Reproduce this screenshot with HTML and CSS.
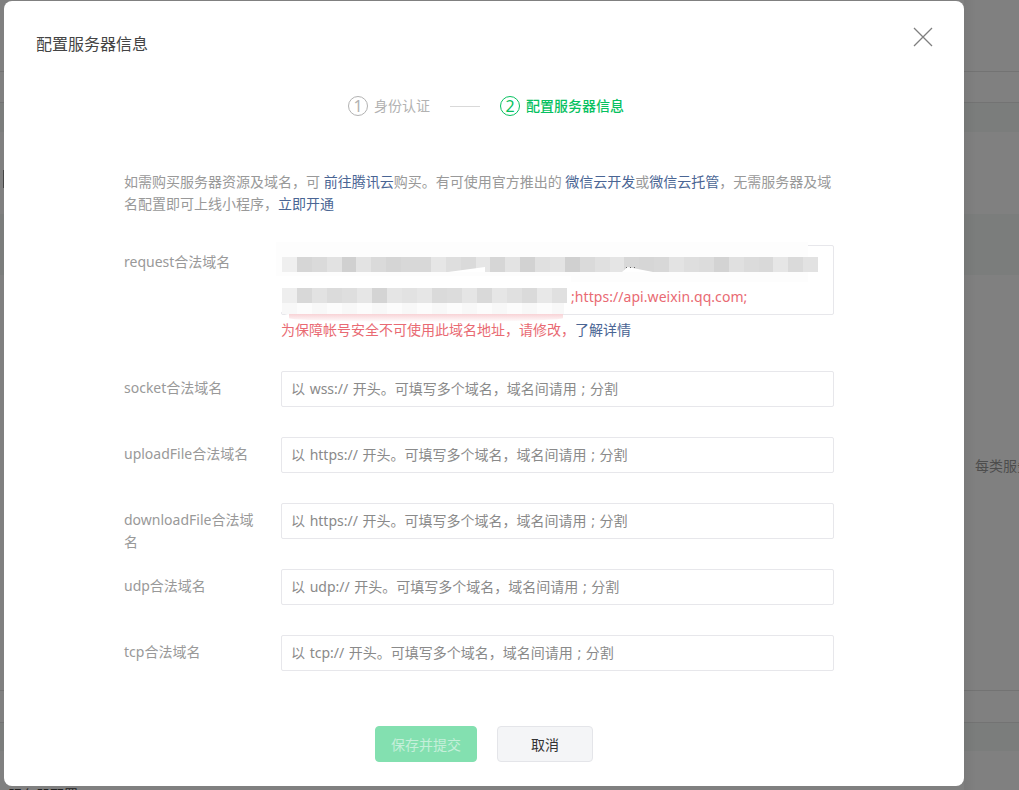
FILE: index.html
```html
<!DOCTYPE html>
<html lang="zh-CN">
<head>
<meta charset="utf-8">
<title>配置服务器信息</title>
<link rel="stylesheet" href="styles.css">
</head>
<body>
<div class="backdrop">
  <div class="bg-band b1"></div>
  <div class="bg-band b2"></div>
  <div class="bg-band b3"></div>
  <div class="bg-line l1"></div>
  <div class="bg-line l2"></div>
  <div class="bg-line l3"></div>
  <div class="bg-line l4"></div>
  <div class="bg-mark"></div>
  <div class="bg-shadow"></div>
  <div class="bg-text">每类服务</div>
  <div class="bg-foot">服务器配置</div>
</div>
<div class="modal">
  <h1 class="title">配置服务器信息</h1>
  <button class="close" aria-label="关闭"><svg width="20" height="20" viewBox="0 0 20 20"><path d="M1 1L19 19M19 1L1 19" fill="none" stroke="#7f7f7f" stroke-width="1.3"/></svg></button>
  <div class="steps">
    <div class="step"><span class="num">1</span><span>身份认证</span></div>
    <div class="step-line"></div>
    <div class="step active"><span class="num">2</span><span class="step-label">配置服务器信息</span></div>
  </div>
  <p class="intro">如需购买服务器资源及域名，可 <a>前往腾讯云</a>购买。有可使用官方推出的 <a>微信云开发</a>或<a>微信云托管</a>，无需服务器及域名配置即可上线小程序，<a>立即开通</a></p>
  <div class="form">
    <div class="row first">
      <label>request合法域名</label>
      <div class="field">
        <div class="textarea">
          <div class="mosaic m1">
            <i style="background:#efefef"></i><i style="background:#d6d6d6"></i><i style="background:#dadada"></i><i style="background:#e2e2e2"></i><i style="background:#d0d0d0"></i><i style="background:#e3e3e3"></i><i style="background:#dadada"></i><i style="background:#d5d5d5"></i><i style="background:#d8d8d8"></i><i style="background:#d8d8d8"></i><i style="background:#e6e6e6"></i><i style="background:#dedede"></i><i style="background:#dadada"></i><i style="background:#e6e6e6"></i><i style="background:#d6d6d6"></i><i style="background:#e3e3e3"></i><i style="background:#d2d2d2"></i><i style="background:#e0e0e0"></i><i style="background:#e3e3e3"></i><i style="background:#d0d0d0"></i><i style="background:#dadada"></i><i style="background:#e0e0e0"></i><i style="background:#e5e5e5"></i><i style="background:#d8d8d8"></i><i style="background:#d6d6d6"></i><i style="background:#d8d8d8"></i><i style="background:#e3e3e3"></i><i style="background:#dedede"></i><i style="background:#dcdcdc"></i><i style="background:#d3d3d3"></i><i style="background:#e0e0e0"></i><i style="background:#dbdbdb"></i><i style="background:#d9d9d9"></i><i style="background:#e6e6e6"></i><i style="background:#dadada"></i><i style="background:#e2e2e2"></i>
          </div>
          <div class="line2">
            <div class="mosaic m2">
              <i style="background:#eeeeee"></i><i style="background:#d8d8d8"></i><i style="background:#e2e2e2"></i><i style="background:#dbdbdb"></i><i style="background:#dedede"></i><i style="background:#e6e6e6"></i><i style="background:#d4d4d4"></i><i style="background:#e5e5e5"></i><i style="background:#e2e2e2"></i><i style="background:#e6e6e6"></i><i style="background:#dadada"></i><i style="background:#dcdcdc"></i><i style="background:#e5e5e5"></i><i style="background:#d9d9d9"></i><i style="background:#e6e6e6"></i><i style="background:#e0e0e0"></i><i style="background:#dadada"></i><i style="background:#e8e8e8"></i><i style="background:#e0e0e0"></i>
            </div>
            <span class="err-text">;https://api.weixin.qq.com;</span>
          </div>
          <div class="smudge white-top"></div>
          <div class="smudge white-bottom"></div>
          <div class="smudge faint"></div>
          <div class="smudge pink"></div>
          <div class="smudge wedge w1"></div>
          <div class="smudge wedge w2"></div>
          <div class="smudge specks"></div>
        </div>
        <div class="err">为保障帐号安全不可使用此域名地址，请修改，<a>了解详情</a></div>
      </div>
    </div>
    <div class="row"><label>socket合法域名</label><div class="field"><input placeholder="以 wss:// 开头。可填写多个域名，域名间请用 ; 分割"></div></div>
    <div class="row"><label>uploadFile合法域名</label><div class="field"><input placeholder="以 https:// 开头。可填写多个域名，域名间请用 ; 分割"></div></div>
    <div class="row"><label>downloadFile合法域名</label><div class="field"><input placeholder="以 https:// 开头。可填写多个域名，域名间请用 ; 分割"></div></div>
    <div class="row"><label>udp合法域名</label><div class="field"><input placeholder="以 udp:// 开头。可填写多个域名，域名间请用 ; 分割"></div></div>
    <div class="row"><label>tcp合法域名</label><div class="field"><input placeholder="以 tcp:// 开头。可填写多个域名，域名间请用 ; 分割"></div></div>
  </div>
  <div class="actions">
    <button class="btn primary">保存并提交</button>
    <button class="btn">取消</button>
  </div>
</div>
</body>
</html>
```
FILE: styles.css
```css
* { box-sizing: border-box; }
html, body { margin: 0; height: 790px; overflow: hidden; }
body {
  font-family: "Noto Sans", "Noto Sans CJK SC", sans-serif;
  font-size: 14px;
  color: #7f7f7f;
  background: #808080;
}
.backdrop { position: absolute; inset: 0; overflow: hidden; }
.bg-line { position: absolute; left: 0; right: 0; height: 1px; background: #737373; }
.l1 { top: 71px; }
.l2 { top: 102px; }
.l3 { top: 690px; }
.l4 { top: 722px; }
.bg-band { position: absolute; left: 0; right: 0; background: #7b7d7c; }
.b1 { top: 102px; height: 30px; }
.b2 { top: 214px; height: 61px; }
.b3 { top: 722px; height: 29px; }
.bg-mark { position: absolute; left: 3px; top: 170px; width: 1px; height: 18px; background: #444; }
.bg-shadow { position: absolute; left: 964px; top: 0; bottom: 0; width: 12px; background: linear-gradient(90deg, rgba(0,0,0,.05), rgba(0,0,0,0)); }
.bg-text { position: absolute; left: 975px; top: 456px; color: #4d4d4d; white-space: nowrap; line-height: 20px; }
.bg-foot { position: absolute; left: 8px; top: 785px; color: #222; white-space: nowrap; line-height: 20px; }
.modal {
  position: absolute;
  left: 4px;
  top: 1px;
  width: 960px;
  height: 785px;
  background: #fff;
  border-radius: 8px;
  padding: 32px 130px 0 120px;
}
.title {
  margin: 0 0 0 -88px;
  font-size: 16px;
  font-weight: 400;
  line-height: 22px;
  color: #444;
}
.close {
  position: absolute;
  right: 31px;
  top: 26px;
  width: 20px;
  height: 20px;
  padding: 0;
  border: 0;
  background: none;
  display: flex;
}
.steps {
  display: flex;
  align-items: center;
  justify-content: center;
  gap: 20px;
  height: 24px;
  margin: 39px 0 0 14px;
  color: #b2b2b2;
}
.step { display: flex; align-items: center; gap: 6px; line-height: 20px; }
.num {
  width: 20px;
  height: 20px;
  border: 1px solid #b2b2b2;
  border-radius: 50%;
  display: flex;
  align-items: center;
  justify-content: center;
  font-size: 16px;
}
.step-line { width: 30px; height: 1px; background: #d9d9d9; }
.step.active { color: #07c160; }
.step.active .num { border-color: #07c160; }
.step-label { font-weight: 500; }
.intro {
  margin: 53px 0 0;
  line-height: 22px;
  color: #999;
  width: 710px;
}
a { color: #4a6594; }
.form { margin-top: 30px; }
.row { display: flex; height: 36px; margin-bottom: 30px; }
.row.first { height: auto; margin-bottom: 31px; }
.row label {
  width: 156px;
  margin-right: 1px;
  padding: 6px 18px 0 0;
  line-height: 22px;
  color: #999;
}
.field { width: 553px; }
input {
  display: block;
  width: 100%;
  height: 36px;
  padding: 0 9px 2px;
  border: 1px solid #e7e7eb;
  border-radius: 2px;
  font: inherit;
  word-spacing: 1px;
  outline: 0;
}
input::placeholder { color: #8a8a8a; opacity: 1; }
.textarea {
  position: relative;
  height: 70px;
  border: 1px solid #e7e7eb;
  border-radius: 2px;
  padding: 11px 0 0 0;
}
.mosaic { display: flex; height: 15px; }
.mosaic i { display: block; width: 15px; flex: none; }
.m1 { position: relative; z-index: 2; }
.m1 i { width: 14.9px; }
.line2 { display: flex; align-items: flex-start; height: 15px; margin-top: 16px; position: relative; z-index: 2; }
.err-text { color: #e96a73; white-space: nowrap; line-height: 20px; margin: -1px 0 0 4px; letter-spacing: .06px; }
.smudge { position: absolute; }
.white-top {
  left: -6px;
  top: -4px;
  width: 532px;
  height: 40px;
  background: #fdfdfd;
  z-index: 1;
}
.white-bottom {
  left: -6px;
  top: 30px;
  width: 295px;
  height: 39px;
  background: #fff;
  border-radius: 0 0 14px 14px;
  z-index: 1;
}
.faint {
  left: 0;
  top: 57px;
  width: 282px;
  height: 11px;
  background: repeating-linear-gradient(90deg, #f8f8f8 0 15px, #fcfcfc 15px 30px);
  z-index: 2;
}
.pink {
  left: 7px;
  top: 68px;
  width: 274px;
  height: 8px;
  background: linear-gradient(#f8d3d6, #fff);
  border-radius: 0 0 50% 50%;
  z-index: 1;
}
.wedge { background: #fff; z-index: 3; top: 21px; height: 5px; }
.w1 { left: 166px; width: 37px; clip-path: polygon(0 100%, 100% 0, 100% 100%); }
.w2 { left: 340px; width: 31px; clip-path: polygon(0 100%, 18% 0, 100% 100%); }
.specks { left: 344px; top: 21px; width: 11px; height: 1px; z-index: 4; background: repeating-linear-gradient(90deg, #666 0 1px, transparent 1px 4px); }
.err { color: #e96a73; line-height: 20px; margin-top: 5px; }
.actions { display: flex; justify-content: center; gap: 20px; margin: 55px 0 0 10px; }
.btn {
  width: 96px;
  height: 36px;
  border: 1px solid #e4e5e9;
  border-radius: 4px;
  background: #f4f5f7;
  color: #333;
  font: inherit;
  padding: 0;
}
.btn.primary { width: 102px; background: #83e0b0; border-color: #83e0b0; color: #c5efda; }
```
